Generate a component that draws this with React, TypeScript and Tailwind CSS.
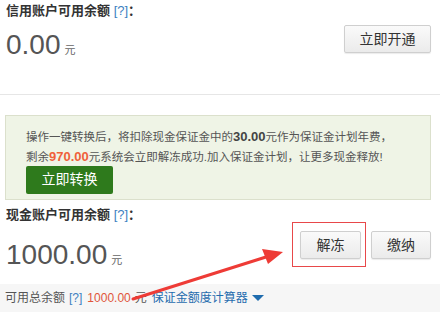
const cjk = { fontFamily: '"Liberation Sans", "Noto Sans CJK SC", sans-serif' };

function GrayButton({ label, className = "" }: { label: string; className?: string }) {
  return (
    <button
      className={`h-[28px] rounded-[2px] border border-[#cfcfcf] bg-gradient-to-b from-[#fafafa] to-[#ebebeb] text-[14px] text-[#333] shadow-[0_1px_1px_rgba(0,0,0,0.08)] ${className}`}
    >
      {label}
    </button>
  );
}

function Help() {
  return <span className="text-[13px] font-normal text-[#3d7fc1]"> [?]</span>;
}

export default function App() {
  return (
    <div className="relative h-[312px] w-[440px] overflow-hidden bg-white" style={cjk}>
      {/* credit account */}
      <div className="flex h-[95px] justify-between border-b border-[#e6e6e6] pr-[9px]">
        <div className="pl-[6px]">
          <div className="mt-[2px] text-[13px] font-bold leading-[18px] text-[#333]">
            信用账户可用余额<Help />：
          </div>
          <div className="mt-[9px] flex items-baseline text-[#555]">
            <span className="text-[28px] leading-[32px]">0.00</span>
            <span className="ml-[4px] text-[11px] text-[#666]">元</span>
          </div>
        </div>
        <GrayButton label="立即开通" className="mt-[25px] w-[87px]" />
      </div>

      {/* conversion notice */}
      <div className="mx-[5px] mt-[20px] h-[85px] w-[426px] border border-[#dbe0cc] bg-[#eff4e6] pl-[20px] pt-[11px]">
        <p className="text-[11.5px] leading-[19px] text-[#555]">
          操作一键转换后，将扣除现金保证金中的<b className="text-[13px] text-[#444]">30.00</b>元作为保证金计划年费，
          <br />
          剩余<b className="text-[13px] text-[#f0603a]">970.00</b>元系统会立即解冻成功.加入保证金计划，让更多现金释放!
        </p>
        <button className="mt-[-3px] h-[28px] w-[87px] rounded-[2px] bg-[#2e7a1c] text-[14px] text-white">
          立即转换
        </button>
      </div>

      {/* cash account */}
      <div className="flex h-[84px] justify-between pr-[9px]">
        <div className="pl-[6px]">
          <div className="mt-[6px] text-[13px] font-bold leading-[18px] text-[#333]">
            现金账户可用余额<Help />：
          </div>
          <div className="mt-[15px] flex items-baseline text-[#555]">
            <span className="text-[28px] leading-[32px]">1000.00</span>
            <span className="ml-[4px] text-[11px] text-[#666]">元</span>
          </div>
        </div>
        <div className="relative mt-[31px] flex gap-[10px]">
          <GrayButton label="解冻" className="w-[61px]" />
          <GrayButton label="缴纳" className="w-[60px]" />
          <div className="absolute left-[-8px] top-[-9px] h-[45px] w-[74px] border border-[#e8484a]" />
        </div>
      </div>

      {/* footer */}
      <div className="flex h-[28px] items-center bg-[#f6f6f6] pl-[5px] text-[12px] text-[#555]">
        可用总余额<span className="ml-[4px] text-[#3d7fc1]">[?]</span>
        <span className="ml-[5px] text-[#e0553a]">1000.00</span>
        <span className="ml-[4px]">元</span>
        <span className="ml-[5px] text-[#1f6cae]">保证金额度计算器</span>
        <svg width="12" height="8" viewBox="0 0 12 8" className="ml-[4px]">
          <path d="M0 1 L12 1 L6 7 Z" fill="#1f6cae" />
        </svg>
      </div>

      {/* annotation arrow */}
      <svg className="pointer-events-none absolute left-0 top-0" width="440" height="312">
        <line x1="133" y1="299" x2="266" y2="257" stroke="#ee3b36" strokeWidth="3" strokeLinecap="round" />
        <path d="M283 252 L262 249 L268 264 Z" fill="#ee3b36" />
      </svg>
    </div>
  );
}
